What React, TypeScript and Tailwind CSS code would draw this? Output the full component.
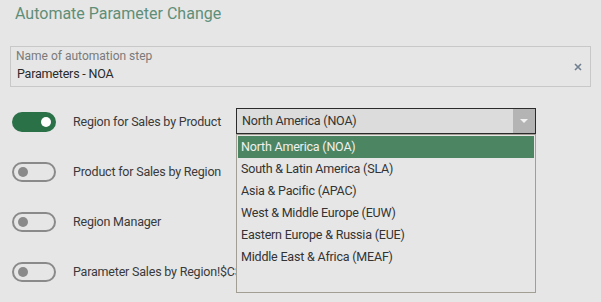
import React from "react";

const items = [
  "North America (NOA)",
  "South & Latin America (SLA)",
  "Asia & Pacific (APAC)",
  "West & Middle Europe (EUW)",
  "Eastern Europe & Russia (EUE)",
  "Middle East & Africa (MEAF)",
];

function Toggle({ on }: { on: boolean }) {
  return on ? (
    <div className="ml-[12px] flex h-[20px] w-[44px] shrink-0 items-center justify-end rounded-full bg-[#2a7148] pr-[5px]">
      <div className="h-[10px] w-[10px] rounded-full bg-white" />
    </div>
  ) : (
    <div className="ml-[12px] flex h-[20px] w-[44px] shrink-0 items-center rounded-full border-2 border-[#8a8a8a] pl-[4px]">
      <div className="h-[10px] w-[10px] rounded-full bg-[#8a8a8a]" />
    </div>
  );
}

export default function App() {
  const rows = [
    { on: true, label: "Region for Sales by Product" },
    { on: false, label: "Product for Sales by Region" },
    { on: false, label: "Region Manager" },
    { on: false, label: "Parameter Sales by Region!$C$" },
  ];
  return (
    <div
      className="relative h-[302px] w-[601px] overflow-hidden bg-[#e6e6e6] text-[#333]"
      style={{ fontFamily: 'Roboto, sans-serif' }}
    >
      <div className="pl-[15px] pt-[2px] text-[16px] leading-[24px] text-[#5f8e78]">
        Automate Parameter Change
      </div>
      <div className="relative mx-[10px] mt-[20px] h-[41px] border border-[#c8c8c8] pl-[5px]">
        <div className="pt-[1px] text-[12px] leading-[16px] text-[#7a7a7a]">Name of automation step</div>
        <div className="pl-[1px] pt-[1px] text-[12.5px] leading-[18px] tracking-[-0.2px] text-[#2a2a2a]">Parameters - NOA</div>
        <div className="absolute right-[8px] top-[16px]">
          <svg width="8" height="8" viewBox="0 0 8 8">
            <path d="M1 1L7 7M7 1L1 7" stroke="#6f7f8f" strokeWidth="1.6" />
          </svg>
        </div>
      </div>
      <div className="mt-[10px]">
        {rows.map((r) => (
          <div key={r.label} className="flex h-[50px] items-center">
            <Toggle on={r.on} />
            <div className="ml-[17px] text-[12.5px] leading-[18px] tracking-[-0.2px] text-[#3a3a3a]">{r.label}</div>
          </div>
        ))}
      </div>
      <div className="absolute left-[236px] top-[108px] flex h-[26px] w-[300px] border border-[#2b2b2b] bg-[#dcdcdc]">
        <div className="flex-1 pl-[5px] text-[12.5px] leading-[24px] tracking-[-0.2px] text-[#333]">North America (NOA)</div>
        <div className="flex w-[22px] items-center justify-center bg-[#b4b4b4]">
          <svg width="8" height="5" viewBox="0 0 8 5">
            <path d="M0 0H8L4 4Z" fill="#f2f2f2" />
          </svg>
        </div>
      </div>
      <div className="absolute left-[236px] top-[134px] h-[159px] w-[300px] border border-[#a39e94] bg-[#e6e6e6] px-[1px] pt-[1px]">
        {items.map((it, i) => (
          <div
            key={it}
            className={
              i === 0
                ? "h-[22px] bg-[#4c8562] pl-[3px] text-[12.5px] leading-[22px] tracking-[-0.2px] text-[#f0f0f0]"
                : "h-[22px] pl-[3px] text-[12.5px] leading-[22px] tracking-[-0.2px] text-[#333]"
            }
          >
            {it}
          </div>
        ))}
      </div>
    </div>
  );
}
